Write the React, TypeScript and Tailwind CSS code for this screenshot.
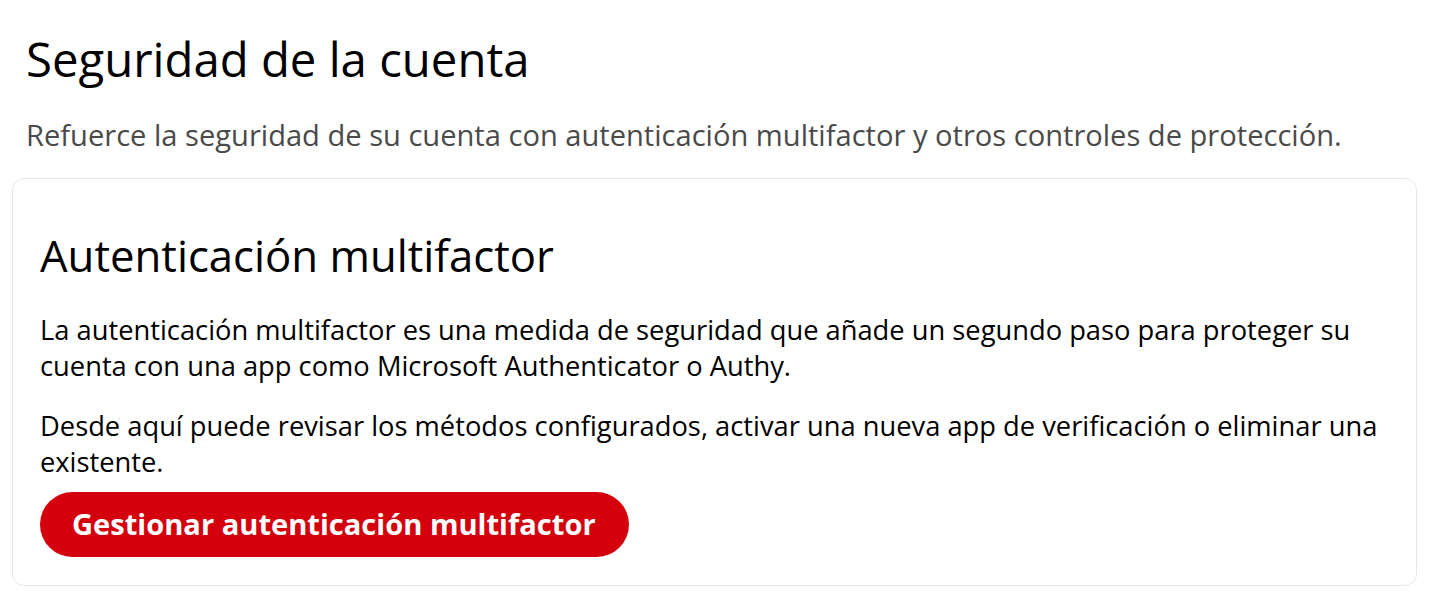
export default function App() {
  return (
    <div className="min-h-screen bg-white px-3 pt-[31px] font-['Open_Sans',sans-serif] text-black">
      <div className="px-[14px]">
        <h1 className="text-[47.3px] leading-[56px] font-normal">Seguridad de la cuenta</h1>
        <p className="mt-7 text-[29.1px] leading-[40px] text-[#4a4a4a]">
          Refuerce la seguridad de su cuenta con autenticación multifactor y otros controles de protección.
        </p>
      </div>
      <section className="mt-[23px] rounded-xl border border-[#e8e8e8] px-[27px] pt-[48px] pb-[28px]">
        <h2 className="text-[43.7px] leading-[56px] font-normal">Autenticación multifactor</h2>
        <p className="mt-[29px] text-[27.3px] leading-[36px]">
          La autenticación multifactor es una medida de seguridad que añade un segundo paso para proteger su cuenta con una app como Microsoft Authenticator o Authy.
        </p>
        <p className="mt-6 text-[27.3px] leading-[36px]">
          Desde aquí puede revisar los métodos configurados, activar una nueva app de verificación o eliminar una existente.
        </p>
        <button className="mt-[12px] h-[65px] rounded-full bg-[#d4000d] pl-8 pr-[33px] text-[29.1px] font-bold text-white">
          Gestionar autenticación multifactor
        </button>
      </section>
    </div>
  );
}
